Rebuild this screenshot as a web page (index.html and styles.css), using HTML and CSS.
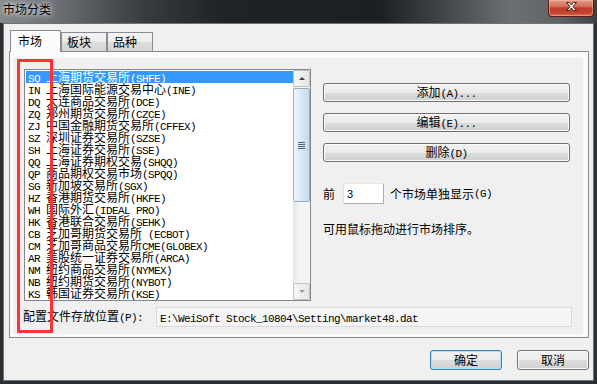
FILE: index.html
```html
<!DOCTYPE html>
<html lang="zh-CN">
<head>
  <meta charset="UTF-8">
  <title>市场分类</title>
  <link rel="stylesheet" href="styles.css">
</head>
<body>

  <div class="window">
    <div class="titlebar">
      <span class="title">市场分类</span>
      <div class="close-btn">
        <svg width="11" height="9" viewBox="0 0 11 9">
          <polygon points="0.5,0.5 3.5,0.5 5.5,3 7.5,0.5 10.5,0.5 7,4.5 10.5,8.5 7.5,8.5 5.5,6 3.5,8.5 0.5,8.5 4,4.5" fill="#fff" stroke="#4a1b12" stroke-width="1"/>
        </svg>
      </div>
    </div>

    <div class="frame">
      <div class="client">
        <div class="tabs">
          <div class="tab active">市场</div>
          <div class="tab">板块</div>
          <div class="tab">品种</div>
        </div>

        <div class="panel">
          <div class="page">
            <div class="top-row">
              <div class="listbox">
                <div class="items" id="items"></div>
                <div class="scrollbar">
                  <div class="sb-btn"><span class="arrow-up"></span></div>
                  <div class="sb-thumb"><span class="grip"></span></div>
                  <div class="sb-track"></div>
                  <div class="sb-btn"><span class="arrow-down"></span></div>
                </div>
              </div>

              <div class="side">
                <button class="btn">添加<span class="en">(A)...</span></button>
                <button class="btn">编辑<span class="en">(E)...</span></button>
                <button class="btn">删除<span class="en">(D)</span></button>
                <div class="count-row">
                  前<input class="num" type="text" value="3">个市场单独显示<span class="en">(G)</span>
                </div>
                <p class="hint">可用鼠标拖动进行市场排序。</p>
              </div>
            </div>

            <div class="path-row">
              <span class="path-label">配置文件存放位置<span class="en">(P):</span></span>
              <div class="path-field"><span class="en">E:\WeiSoft Stock_10804\Setting\market48.dat</span></div>
            </div>
          </div>
        </div>

        <div class="dialog-btns">
          <button class="btn default">确定</button>
          <button class="btn">取消</button>
        </div>
      </div>
    </div>

    <!-- 标注框 -->
    <div class="mark"></div>
  </div>

  <script>
    const markets = [
      ["SQ", "上海期货交易所(SHFE)"],
      ["IN", "上海国际能源交易中心(INE)"],
      ["DQ", "大连商品交易所(DCE)"],
      ["ZQ", "郑州期货交易所(CZCE)"],
      ["ZJ", "中国金融期货交易所(CFFEX)"],
      ["SZ", "深圳证券交易所(SZSE)"],
      ["SH", "上海证券交易所(SSE)"],
      ["QQ", "上海证券期权交易(SHQQ)"],
      ["QP", "商品期权交易市场(SPQQ)"],
      ["SG", "新加坡交易所(SGX)"],
      ["HZ", "香港期货交易所(HKFE)"],
      ["WH", "国际外汇(IDEAL PRO)"],
      ["HK", "香港联合交易所(SEHK)"],
      ["CB", "芝加哥期货交易所 (ECBOT)"],
      ["CM", "芝加哥商品交易所CME(GLOBEX)"],
      ["AR", "美股统一证券交易所(ARCA)"],
      ["NM", "纽约商品交易所(NYMEX)"],
      ["NB", "纽约期货交易所(NYBOT)"],
      ["KS", "韩国证券交易所(KSE)"]
    ];

    // 半角字符用等宽字体
    function mix(text) {
      return text.replace(/[\x20-\x7e]+/g, m => `<span class="en">${m}</span>`);
    }

    const list = document.getElementById("items");
    markets.forEach(([code, name], i) => {
      const row = document.createElement("div");
      row.className = i === 0 ? "item selected" : "item";
      row.innerHTML = mix(code + " " + name);
      list.appendChild(row);
    });
  </script>
</body>
</html>
```

FILE: styles.css
```css
body {
  margin: 0;
  background: #2b2f33;
}

.window {
  position: relative;
  width: 597px;
  height: 384px;
  display: flex;
  flex-direction: column;
  background: #2b2f33;
  font: 12px "Noto Sans CJK SC", sans-serif;
  color: #000;
}

.en {
  font-family: "Liberation Mono", monospace;
  font-size: 11px;
  letter-spacing: -0.6px;
}

/* 标题栏 */
.titlebar {
  height: 23px;
  display: flex;
  justify-content: space-between;
  align-items: flex-start;
  padding-left: 3px;
  background: linear-gradient(90deg, #85898c 0, #6a6e72 60px, #3a3e42 140px, #1f2327 220px, #1c2024 380px, #4b5053 460px, #6b7073 510px, #5e6366 560px, #3d4144 597px);
}

.title {
  margin-top: 3px;
  line-height: 12px;
  text-shadow: 0 0 4px #fff, 0 0 8px rgba(255, 255, 255, 0.7);
}

.close-btn {
  width: 46px;
  height: 17px;
  margin-right: 3px;
  box-sizing: border-box;
  border: 1px solid #5a1c12;
  border-top: none;
  border-radius: 0 0 4px 4px;
  background: linear-gradient(#e59a87 0%, #d4705a 40%, #bf3d26 50%, #c4442c 80%, #d9694f 100%);
  box-shadow: inset 0 0 0 1px rgba(255, 200, 180, 0.45);
  display: flex;
  justify-content: center;
  padding-top: 2px;
}

.frame {
  flex: 1;
  display: flex;
  padding: 0 3px 3px;
}

.client {
  flex: 1;
  box-sizing: border-box;
  border: 1px solid #6d7277;
  background: #f0f0f0;
  padding: 6px 0 0 5px;
}

/* 选项卡 */
.tabs {
  display: flex;
  align-items: flex-end;
  height: 21px;
  margin-left: 1px;
}

.tab {
  width: 46px;
  height: 19px;
  box-sizing: border-box;
  border: 1px solid #898c95;
  border-bottom: none;
  padding-left: 5px;
  line-height: 18px;
  background: linear-gradient(#f3f3f3 0%, #ebebeb 50%, #dedede 51%, #d3d3d3 100%);
}

.tab.active {
  position: relative;
  z-index: 1;
  width: 51px;
  height: 22px;
  margin-bottom: -1px;
  padding-left: 7px;
  line-height: 20px;
  background: #fcfcfc;
}

.panel {
  width: 580px;
  height: 287px;
  box-sizing: border-box;
  border: 1px solid #898c95;
  background: #fbfbfb;
  padding: 6px 5px 3px 3px;
  display: flex;
}

.page {
  flex: 1;
  background: #f0f0f0;
  padding: 11px 0 0 11px;
}

.top-row {
  display: flex;
  align-items: flex-start;
}

/* 列表 */
.listbox {
  width: 287px;
  height: 232px;
  box-sizing: border-box;
  border: 1px solid #828790;
  background: #fff;
  display: flex;
}

.items {
  flex: 1;
  padding: 1px 0 0 1px;
}

.item {
  height: 12px;
  line-height: 12px;
  padding-left: 2px;
  white-space: nowrap;
}

.item.selected {
  background: #3399ff;
  color: #fff;
}

.scrollbar {
  width: 17px;
  display: flex;
  flex-direction: column;
  background: linear-gradient(90deg, #e4e4e4, #f4f4f4 35%, #f4f4f4);
}

.sb-btn {
  height: 17px;
  box-sizing: border-box;
  border: 1px solid #c2c2c2;
  border-radius: 2px;
  background: linear-gradient(90deg, #f7f7f7, #e6e6e6);
  display: flex;
  align-items: center;
  justify-content: center;
}

.arrow-up {
  border-left: 3px solid transparent;
  border-right: 3px solid transparent;
  border-bottom: 3px solid #3f3f3f;
}

.arrow-down {
  border-left: 3px solid transparent;
  border-right: 3px solid transparent;
  border-top: 3px solid #9a9a9a;
}

.sb-thumb {
  height: 114px;
  margin-top: 1px;
  box-sizing: border-box;
  border: 1px solid #98adc4;
  border-radius: 2px;
  background: linear-gradient(90deg, #f1f7fc, #d6e7f5 50%, #c3dbef);
  display: flex;
  align-items: center;
  justify-content: center;
}

.grip {
  width: 7px;
  height: 7px;
  background: repeating-linear-gradient(#56657a 0 1px, transparent 1px 2px);
}

.sb-track {
  flex: 1;
}

/* 右侧 */
.side {
  width: 247px;
  margin-left: 12px;
  padding-top: 14px;
  display: flex;
  flex-direction: column;
}

.btn {
  height: 19px;
  box-sizing: border-box;
  padding: 0;
  border: 1px solid #707070;
  border-radius: 3px;
  background: linear-gradient(#f2f2f2 0%, #ebebeb 50%, #dddddd 51%, #cfcfcf 100%);
  box-shadow: inset 0 0 0 1px #fbfbfb;
  font: 12px "Noto Sans CJK SC", sans-serif;
  line-height: 16px;
  color: #000;
}

.btn + .btn {
  margin-top: 11px;
}

.count-row {
  display: flex;
  align-items: center;
  height: 21px;
  margin-top: 21px;
}

.num {
  width: 41px;
  height: 21px;
  box-sizing: border-box;
  margin: 0 6px 0 8px;
  padding: 0 3px;
  border: 1px solid #abadb3;
  border-top-color: #e3e9ef;
  border-left-color: #e2e3ea;
  background: #fff;
  font: 11px "Liberation Sans", sans-serif;
}

.hint {
  margin: 19px 0 0;
  line-height: 12px;
}

/* 路径 */
.path-row {
  display: flex;
  align-items: center;
  margin: 6px 0 0 -1px;
}

.path-label {
  width: 133px;
  line-height: 12px;
}

.path-field {
  width: 416px;
  height: 20px;
  box-sizing: border-box;
  border: 1px solid #d9d9d9;
  background: #f5f5f5;
  padding-left: 3px;
  line-height: 18px;
}

.dialog-btns {
  width: 580px;
  margin-top: 12px;
  display: flex;
  justify-content: flex-end;
  gap: 15px;
}

.dialog-btns .btn {
  width: 72px;
  height: 20px;
  margin: 0;
}

.btn.default {
  border-color: #3c7fb1;
  box-shadow: inset 0 0 0 1px #a9e4fb;
}

/* 红色标注 */
.mark {
  position: absolute;
  left: 17px;
  top: 59px;
  width: 36px;
  height: 274px;
  box-sizing: border-box;
  border: 3px solid #ff3333;
}
```
